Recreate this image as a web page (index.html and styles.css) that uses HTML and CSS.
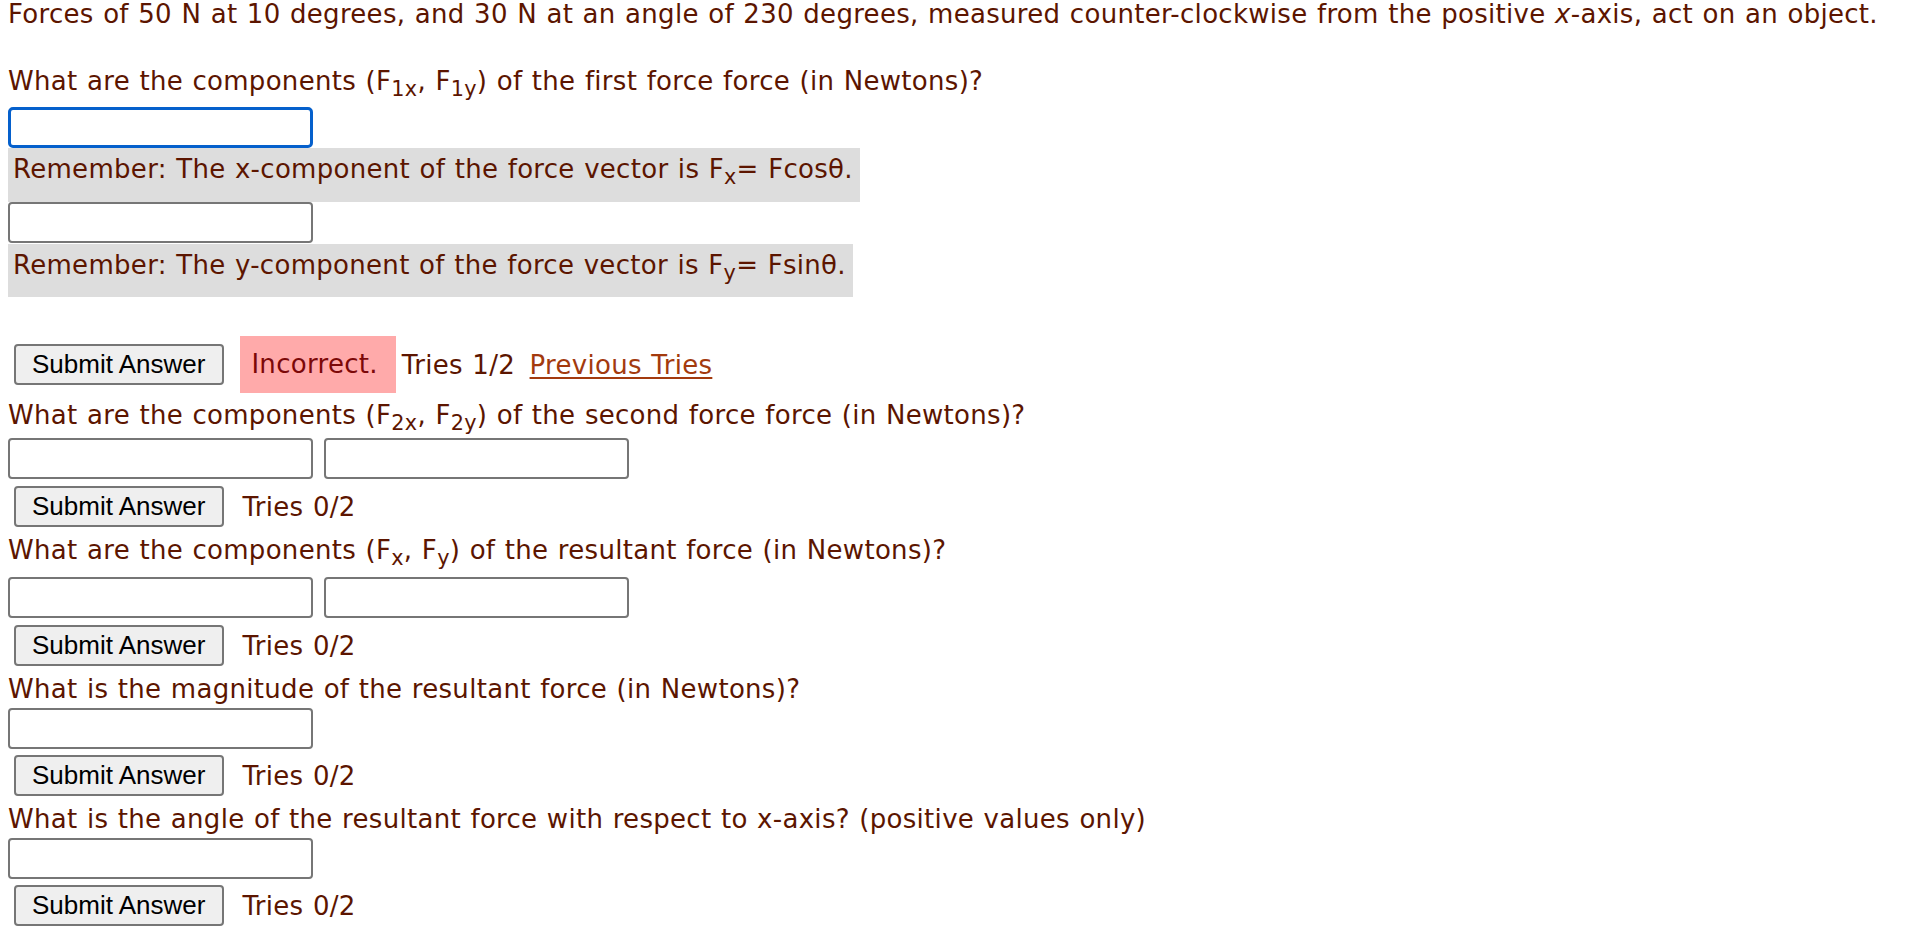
FILE: index.html
```html
<!DOCTYPE html>
<html lang="en">
<head>
<meta charset="utf-8">
<title>Forces</title>
<link rel="stylesheet" href="styles.css">
</head>
<body>
<div class="page">
  <p class="intro">Forces of 50 N at 10 degrees, and 30 N at an angle of 230 degrees, measured counter-clockwise from the positive <i>x</i>-axis, act on an object.</p>

  <p class="q q-first">What are the components (F<sub>1x</sub>, F<sub>1y</sub>) of the first force force (in Newtons)?</p>
  <div class="field field-focus field-first"></div>
  <div class="hint hint-x">Remember: The x-component of the force vector is F<sub>x</sub>= Fcos&theta;.</div>
  <div class="field field-after-hint"></div>
  <div class="hint hint-y">Remember: The y-component of the force vector is F<sub>y</sub>= Fsin&theta;.</div>
  <div class="row row-feedback">
    <button class="submit" type="button">Submit Answer</button>
    <span class="incorrect">Incorrect.</span>
    <span class="tries tries-after">Tries 1/2 <a href="#" class="prev">Previous Tries</a></span>
  </div>

  <p class="q q-sub q-after-feedback">What are the components (F<sub>2x</sub>, F<sub>2y</sub>) of the second force force (in Newtons)?</p>
  <div class="pair pair-a">
    <div class="field"></div>
    <div class="field"></div>
  </div>
  <div class="row">
    <button class="submit" type="button">Submit Answer</button>
    <span class="tries">Tries 0/2</span>
  </div>

  <p class="q q-sub">What are the components (F<sub>x</sub>, F<sub>y</sub>) of the resultant force (in Newtons)?</p>
  <div class="pair pair-b">
    <div class="field"></div>
    <div class="field"></div>
  </div>
  <div class="row">
    <button class="submit" type="button">Submit Answer</button>
    <span class="tries">Tries 0/2</span>
  </div>

  <p class="q">What is the magnitude of the resultant force (in Newtons)?</p>
  <div class="field field-single"></div>
  <div class="row">
    <button class="submit" type="button">Submit Answer</button>
    <span class="tries">Tries 0/2</span>
  </div>

  <p class="q">What is the angle of the resultant force with respect to x-axis? (positive values only)</p>
  <div class="field field-single"></div>
  <div class="row">
    <button class="submit" type="button">Submit Answer</button>
    <span class="tries">Tries 0/2</span>
  </div>
</div>
</body>
</html>
```

FILE: styles.css
```css
html, body {
  margin: 0;
  padding: 0;
  background: #ffffff;
}

.page {
  padding: 0 0 0 8px;
  font-family: "DejaVu Sans", Verdana, sans-serif;
  font-size: 26px;
  letter-spacing: 0.3px;
  word-spacing: 0.9px;
  color: #5c1500;
}

p {
  margin: 0;
}

.intro {
  line-height: 28px;
  white-space: nowrap;
}

sub {
  font-size: 0.8em;
  line-height: 0;
  vertical-align: -0.3em;
}

.q {
  margin-top: 8px;
  line-height: 30px;
  white-space: nowrap;
}

.q-first {
  margin-top: 38px;
}

.q-after-feedback {
  margin-top: 7px;
}

.field {
  box-sizing: border-box;
  width: 305px;
  height: 41px;
  border: 2px solid #767676;
  border-radius: 4px;
  background: #ffffff;
  margin-top: 4px;
}

.field-first {
  margin-top: 11px;
}

.field-after-hint {
  margin-top: 0;
}

.field-focus {
  border: 3px solid #0560cc;
  border-radius: 5px;
}

.hint {
  display: block;
  width: max-content;
  background: #dddddd;
  line-height: 30px;
  white-space: nowrap;
  padding: 6px 7px 18px 5px;
}

.hint-y {
  margin-top: 1px;
  padding-bottom: 17px;
}

.pair {
  display: flex;
  gap: 11px;
  margin-top: 12px;
}

.pair .field {
  margin-top: 0;
}

.pair-a {
  margin-top: 8px;
}

.row {
  display: flex;
  align-items: center;
  margin-top: 7px;
  height: 41px;
  white-space: nowrap;
}

.field-single + .row {
  margin-top: 6px;
}

.row-feedback {
  margin-top: 39px;
  height: 57px;
}

.submit {
  box-sizing: border-box;
  height: 41px;
  margin: 0 0 0 6px;
  padding: 0 17px 0 16px;
  background: #efefef;
  border: 2px solid #767676;
  border-radius: 4px;
  font-family: "Liberation Sans", Arial, sans-serif;
  font-size: 26px;
  letter-spacing: 0;
  word-spacing: 0;
  color: #000000;
}

.tries {
  margin-left: 18px;
  line-height: 30px;
}

.incorrect {
  margin-left: 16px;
  height: 57px;
  line-height: 57px;
  padding: 0 18px 0 11px;
  background: #ffaaaa;
  color: #7c0808;
}

.tries-after {
  margin-left: 6px;
}

.prev {
  margin-left: 5px;
  color: #a33a0e;
  text-decoration: underline;
  text-underline-offset: 3px;
}
```
